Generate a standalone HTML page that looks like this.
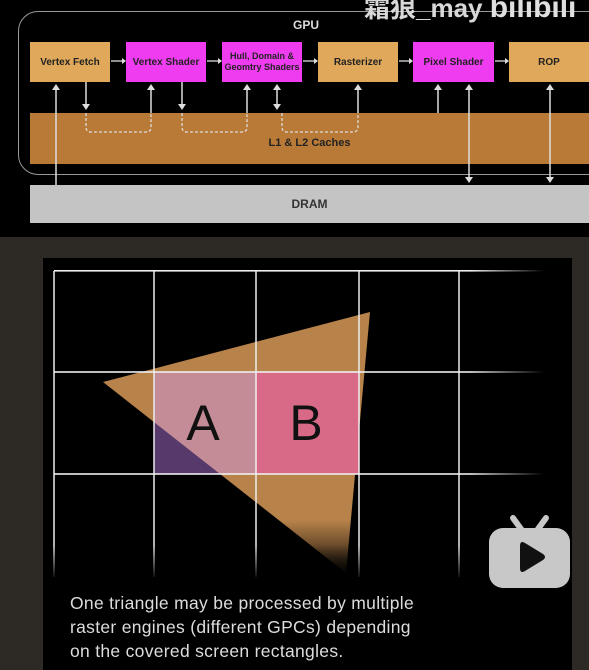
<!DOCTYPE html>
<html><head><style>
body{margin:0;width:589px;height:670px;overflow:hidden;background:#2d2a25;font-family:"Liberation Sans",sans-serif;position:relative}
.a{position:absolute}
.box{position:absolute;top:42px;height:40px;display:flex;align-items:center;justify-content:center;text-align:center;font-weight:bold;font-size:10px;color:#222;line-height:11px}
.o{background:#e0a85a}.p{background:#f03cf0}
</style></head><body>
<div class="a" style="left:0;top:0;width:589px;height:237px;background:#000"></div>
<div class="a" style="left:18px;top:11px;width:640px;height:162px;border:1.5px solid #999;border-radius:20px"></div>
<div class="a" style="left:293px;top:18px;color:#ddd;font-weight:bold;font-size:12px">GPU</div>
<div class="a" style="left:30px;top:113px;width:559px;height:51px;background:#b87a36"></div>
<div class="a" style="left:30px;top:137px;width:559px;text-align:center;font-weight:bold;font-size:11px;color:#222">L1 &amp; L2 Caches</div>
<div class="a" style="left:30px;top:185px;width:559px;height:38px;background:#c4c4c4;display:flex;align-items:center;justify-content:center;font-weight:bold;font-size:12px;color:#333">DRAM</div>
<div class="box o" style="left:30px;width:80px">Vertex Fetch</div>
<div class="box p" style="left:126px;width:80px">Vertex Shader</div>
<div class="box p" style="left:222px;width:80px;font-size:9px">Hull, Domain &amp;<br>Geomtry Shaders</div>
<div class="box o" style="left:318px;width:80px">Rasterizer</div>
<div class="box p" style="left:413px;width:81px">Pixel Shader</div>
<div class="box o" style="left:509px;width:80px">ROP</div>
<svg class="a" style="left:0;top:0" width="589" height="237" fill="#ddd" stroke="#ddd" stroke-width="1.5">
<g stroke-width="1.3">
<line x1="111" y1="61" x2="122" y2="61"/><line x1="207" y1="61" x2="218" y2="61"/><line x1="303" y1="61" x2="314" y2="61"/><line x1="399" y1="61" x2="409" y2="61"/><line x1="495" y1="61" x2="505" y2="61"/>
</g>
<g stroke="none"><path d="M122 58l4 3-4 3z"/><path d="M218 58l4 3-4 3z"/><path d="M314 58l4 3-4 3z"/><path d="M409 58l4 3-4 3z"/><path d="M505 58l4 3-4 3z"/></g>
<line x1="56" y1="86" x2="56" y2="185"/><path d="M52 90l4-6 4 6z" stroke="none"/>
<line x1="86" y1="82" x2="86" y2="108"/><path d="M82 104l4 6 4-6z" stroke="none"/>
<line x1="151" y1="86" x2="151" y2="113"/><path d="M147 90l4-6 4 6z" stroke="none"/>
<line x1="182" y1="82" x2="182" y2="108"/><path d="M178 104l4 6 4-6z" stroke="none"/>
<line x1="247" y1="86" x2="247" y2="113"/><path d="M243 90l4-6 4 6z" stroke="none"/>
<line x1="277" y1="86" x2="277" y2="108"/><path d="M273 90l4-6 4 6z M273 104l4 6 4-6z" stroke="none"/>
<line x1="358" y1="86" x2="358" y2="113"/><path d="M354 90l4-6 4 6z" stroke="none"/>
<line x1="438" y1="86" x2="438" y2="113"/><path d="M434 90l4-6 4 6z" stroke="none"/>
<line x1="469" y1="86" x2="469" y2="180"/><path d="M465 90l4-6 4 6z M465 177l4 6 4-6z" stroke="none"/>
<line x1="550" y1="86" x2="550" y2="180"/><path d="M546 90l4-6 4 6z M546 177l4 6 4-6z" stroke="none"/>
<g fill="none" stroke-dasharray="3 2" stroke-width="1.3">
<path d="M86 113v14q0 5 5 5h55q5 0 5-5v-14"/><path d="M182 113v14q0 5 5 5h55q5 0 5-5v-14"/><path d="M282 113v14q0 5 5 5h66q5 0 5-5v-14"/>
</g>
</svg>
<div class="a" style="left:364px;top:-12px;color:#d8d8d8;font-size:26px;font-weight:bold;font-family:'Liberation Sans','Noto Sans CJK SC',sans-serif;white-space:nowrap">霜狼_may <span style="font-size:30px;color:#e0e0e0">bilibili</span></div>
<div class="a" style="left:43px;top:258px;width:529px;height:412px;background:#000"></div>
<svg class="a" style="left:0;top:0" width="589" height="670">
<defs>
<linearGradient id="f" x1="0" y1="0" x2="0" y2="1"><stop offset="0" stop-color="#000" stop-opacity="0"/><stop offset="1" stop-color="#000"/></linearGradient>
<linearGradient id="h" x1="54" y1="0" x2="544" y2="0" gradientUnits="userSpaceOnUse"><stop offset="0.85" stop-color="#eee"/><stop offset="1" stop-color="#eee" stop-opacity="0"/></linearGradient>
<clipPath id="c"><rect x="154" y="372" width="102" height="102"/></clipPath>
</defs>
<polygon points="103,382 370,312 346,573" fill="#b8834a"/>
<rect x="154" y="372" width="102" height="102" fill="#573a6b"/>
<polygon points="103,382 370,312 346,573" fill="#c38c96" clip-path="url(#c)"/>
<rect x="256" y="372" width="103" height="102" fill="#d86a87"/>
<rect x="43" y="520" width="529" height="60" fill="url(#f)"/>
<g stroke="#eee" stroke-width="1.5">
<line x1="54" y1="271" x2="54" y2="577"/><line x1="154" y1="271" x2="154" y2="577"/><line x1="256" y1="271" x2="256" y2="577"/><line x1="359" y1="271" x2="359" y2="577"/><line x1="459" y1="271" x2="459" y2="577"/>
</g>
<rect x="54" y="270" width="490" height="1.6" fill="url(#h)"/>
<rect x="54" y="371.2" width="490" height="1.6" fill="url(#h)"/>
<rect x="54" y="473.2" width="490" height="1.6" fill="url(#h)"/>
<rect x="43" y="545" width="529" height="35" fill="url(#f)"/>
<text x="203" y="440" font-size="50" text-anchor="middle" fill="#111" font-family="Liberation Sans">A</text>
<text x="306" y="440" font-size="50" text-anchor="middle" fill="#111" font-family="Liberation Sans">B</text>
<rect x="489" y="528" width="81" height="60" rx="14" fill="#c8c8c8"/>
<line x1="513" y1="518" x2="521" y2="529" stroke="#c8c8c8" stroke-width="6" stroke-linecap="round"/>
<line x1="546" y1="518" x2="538" y2="529" stroke="#c8c8c8" stroke-width="6" stroke-linecap="round"/>
<path d="M520 546q0-6 5-3l18 11q4 3 0 6l-18 11q-5 3-5-3z" fill="#111"/>
</svg>
<div class="a" style="left:70px;top:591px;color:#ddd;font-size:17.5px;line-height:24px;letter-spacing:0.3px;white-space:nowrap">One triangle may be processed by multiple<br>raster engines (different GPCs) depending<br>on the covered screen rectangles.</div>
</body></html>
